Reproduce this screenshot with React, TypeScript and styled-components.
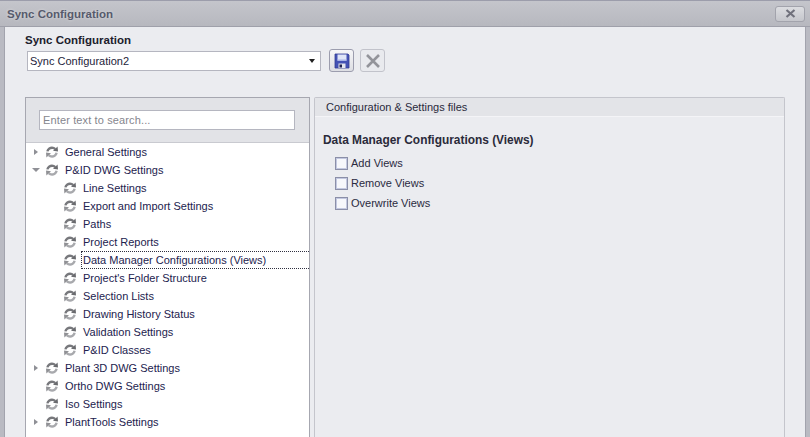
import React from 'react';
import styled, { createGlobalStyle } from 'styled-components';

const GlobalStyle = createGlobalStyle`
  html, body {
    margin: 0;
    width: 810px;
    height: 437px;
    overflow: hidden;
    background: #b9bac2;
    font-family: 'Liberation Sans', Arial, sans-serif;
    font-size: 11px;
  }
`;

type TreeNode = { label: string; expander?: 'closed' | 'open'; child?: boolean; focused?: boolean };

const nodes: TreeNode[] = [
  { label: 'General Settings', expander: 'closed' },
  { label: 'P&ID DWG Settings', expander: 'open' },
  { label: 'Line Settings', child: true },
  { label: 'Export and Import Settings', child: true },
  { label: 'Paths', child: true },
  { label: 'Project Reports', child: true },
  { label: 'Data Manager Configurations (Views)', child: true, focused: true },
  { label: "Project's Folder Structure", child: true },
  { label: 'Selection Lists', child: true },
  { label: 'Drawing History Status', child: true },
  { label: 'Validation Settings', child: true },
  { label: 'P&ID Classes', child: true },
  { label: 'Plant 3D DWG Settings', expander: 'closed' },
  { label: 'Ortho DWG Settings' },
  { label: 'Iso Settings' },
  { label: 'PlantTools Settings', expander: 'closed' },
];

const SyncIcon = () => (
  <SyncSvg viewBox="0 0 14 14">
    <path d="M2.4 6.4C2.8 4 5.4 2.2 8 2.8c.9.2 1.6.7 2.2 1.3" fill="none" stroke="#77787c" strokeWidth="2.4" />
    <path d="M8 5.8 13 6.6 12.6 1.4z" fill="#6a6b6f" />
    <path d="M11.6 7.8c-.4 2.4-3 4.2-5.6 3.6-.9-.2-1.6-.7-2.2-1.3" fill="none" stroke="#a8a9ad" strokeWidth="2.4" />
    <path d="M6 8.2 1 7.4 1.4 12.6z" fill="#909195" />
  </SyncSvg>
);

const SaveIcon = () => (
  <svg width="16" height="16" viewBox="0 0 16 16">
    <path d="M1 1h13l1 1v13H1z" fill="#4452b4" stroke="#343c94" strokeWidth="0.8" />
    <rect x="3.5" y="1.5" width="9" height="6" fill="#dfe5f8" />
    <rect x="3.5" y="6.5" width="9" height="1.5" fill="#a9b4e6" />
    <rect x="4.5" y="10.5" width="7" height="4.5" fill="#e4e6ee" />
    <rect x="5.5" y="11.5" width="2.5" height="3" fill="#1f2350" />
  </svg>
);

const CrossIcon = () => (
  <svg width="16" height="16" viewBox="0 0 16 16">
    <path d="M2 2l12 12M14 2 2 14" stroke="#93949a" strokeWidth="2.6" fill="none" />
  </svg>
);

const CloseGlyph = () => (
  <svg width="11" height="9" viewBox="0 0 11 9">
    <path d="M1.5 1l8 7M9.5 1l-8 7" stroke="#70717c" strokeWidth="2.2" fill="none" />
  </svg>
);

const App = () => (
  <>
    <GlobalStyle />
    <Win>
      <TitleBar>
        <TitleText>Sync Configuration</TitleText>
        <CloseButton>
          <CloseGlyph />
        </CloseButton>
      </TitleBar>
      <Body>
        <SectionLabel>Sync Configuration</SectionLabel>
        <ComboRow>
          <Combo>
            <span>Sync Configuration2</span>
            <ComboArrow />
          </Combo>
          <ToolButton $active>
            <SaveIcon />
          </ToolButton>
          <ToolButton>
            <CrossIcon />
          </ToolButton>
        </ComboRow>
        <Panels>
          <TreePanel>
            <SearchBar>
              <SearchInput>Enter text to search...</SearchInput>
            </SearchBar>
            <Tree>
              {nodes.map(n => (
                <Row key={n.label} $child={n.child}>
                  <Expander>
                    {n.expander === 'closed' && <ClosedArrow />}
                    {n.expander === 'open' && <OpenArrow />}
                  </Expander>
                  <SyncIcon />
                  <RowLabel $focused={n.focused}>{n.label}</RowLabel>
                </Row>
              ))}
            </Tree>
          </TreePanel>
          <SettingsPanel>
            <SettingsHeader>Configuration &amp; Settings files</SettingsHeader>
            <SettingsBody>
              <SettingsTitle>Data Manager Configurations (Views)</SettingsTitle>
              <CheckList>
                <CheckRow>
                  <CheckBox />
                  Add Views
                </CheckRow>
                <CheckRow>
                  <CheckBox />
                  Remove Views
                </CheckRow>
                <CheckRow>
                  <CheckBox />
                  Overwrite Views
                </CheckRow>
              </CheckList>
            </SettingsBody>
          </SettingsPanel>
        </Panels>
      </Body>
    </Win>
  </>
);

const Win = styled.div`
  width: 810px;
  height: 437px;
  display: flex;
  flex-direction: column;
  box-sizing: border-box;
  border-top: 1px solid #9c9dab;
  overflow: hidden;
`;

const TitleBar = styled.div`
  height: 25px;
  flex: none;
  display: flex;
  align-items: center;
  justify-content: space-between;
  padding: 0 5px 0 7px;
  background: linear-gradient(#c4c5cb, #b7b8bf);
  border-bottom: 1px solid #9fa0aa;
`;

const TitleText = styled.div`
  font-size: 11.5px;
  font-weight: bold;
  color: #565a6c;
  text-shadow: 0 0 3px rgba(255, 255, 255, 0.5);
`;

const CloseButton = styled.div`
  width: 28px;
  height: 14px;
  display: flex;
  align-items: center;
  justify-content: center;
  border: 1px solid #a2a3ac;
  border-radius: 3px;
  background: linear-gradient(#dcdde1, #c5c6cc);
`;

const Body = styled.div`
  flex: 1;
  min-height: 0;
  margin: 0 4px 0 4px;
  padding: 6px 20px 0 20px;
  background: #ebecf0;
  border-left: 1px solid #a2a3ad;
  border-right: 1px solid #a2a3ad;
`;

const SectionLabel = styled.div`
  height: 16px;
  line-height: 15px;
  font-size: 11.5px;
  font-weight: bold;
  color: #20202c;
`;

const ComboRow = styled.div`
  display: flex;
  align-items: center;
  margin: 0 0 25px 2px;
  height: 23px;
`;

const Combo = styled.div`
  width: 294px;
  height: 20px;
  box-sizing: border-box;
  display: flex;
  align-items: center;
  justify-content: space-between;
  padding: 0 5px 0 2px;
  margin-right: 8px;
  background: #fff;
  border: 1px solid #b5b6c0;
  color: #23233a;
`;

const ComboArrow = styled.span`
  border-left: 3.5px solid transparent;
  border-right: 3.5px solid transparent;
  border-top: 4px solid #202020;
`;

const ToolButton = styled.div<{ $active?: boolean }>`
  width: 25px;
  height: 23px;
  box-sizing: border-box;
  display: flex;
  align-items: center;
  justify-content: center;
  margin-right: 6px;
  border-radius: 3px;
  border: 1px solid ${p => (p.$active ? '#9c9dae' : '#c2c3cb')};
  background: ${p => (p.$active ? 'linear-gradient(#f6f6f8, #dddee3)' : '#e9eaee')};
`;

const Panels = styled.div`
  display: flex;
  gap: 4px;
  height: 360px;
`;

const TreePanel = styled.div`
  width: 285px;
  flex: none;
  box-sizing: border-box;
  display: flex;
  flex-direction: column;
  border: 1px solid #a6a7b0;
  border-bottom: none;
  background: #fff;
`;

const SearchBar = styled.div`
  height: 45px;
  flex: none;
  box-sizing: border-box;
  padding: 12px 14px 0 13px;
  background: #e2e3e7;
  border-bottom: 1px solid #c9cad0;
`;

const SearchInput = styled.div`
  height: 20px;
  line-height: 18px;
  box-sizing: border-box;
  padding-left: 3px;
  background: #fff;
  border: 1px solid #b5b6c0;
  color: #85868e;
  letter-spacing: 0.13px;
`;

const Tree = styled.div`
  display: flex;
  flex-direction: column;
`;

const Row = styled.div<{ $child?: boolean }>`
  height: 18px;
  display: flex;
  align-items: center;
  padding-left: ${p => (p.$child ? '38px' : '20px')};
  color: #22224e;
  white-space: nowrap;
`;

const Expander = styled.span`
  width: 7px;
  height: 9px;
  margin-left: -14px;
  margin-right: 7px;
  display: flex;
  align-items: center;
  justify-content: center;
  flex: none;
`;

const ClosedArrow = styled.span`
  border-top: 3.5px solid transparent;
  border-bottom: 3.5px solid transparent;
  border-left: 4px solid #8f9096;
`;

const OpenArrow = styled.span`
  border-left: 4px solid transparent;
  border-right: 4px solid transparent;
  border-top: 4px solid #8f9096;
`;

const SyncSvg = styled.svg`
  width: 14px;
  height: 14px;
  flex: none;
  margin-right: 4px;
  margin-left: -1px;
`;

const RowLabel = styled.span<{ $focused?: boolean }>`
  flex: ${p => (p.$focused ? '1' : 'none')};
  height: 18px;
  line-height: 16px;
  box-sizing: border-box;
  padding-left: 1px;
  border: 1px ${p => (p.$focused ? 'dotted #303040' : 'solid transparent')};
  border-width: ${p => (p.$focused ? '1px 0 1px 1px' : '1px')};
`;

const SettingsPanel = styled.div`
  width: 471px;
  flex: none;
  box-sizing: border-box;
  border: 1px solid #c4c5cc;
  border-bottom: none;
  border-radius: 2px 2px 0 0;
`;

const SettingsHeader = styled.div`
  height: 18px;
  line-height: 18px;
  padding-left: 11px;
  color: #2a2a3c;
  background: #e3e4e8;
  border-bottom: 1px solid #f4f4f7;
`;

const SettingsBody = styled.div`
  padding: 15px 0 0 8px;
`;

const SettingsTitle = styled.div`
  height: 16px;
  line-height: 16px;
  font-size: 11.9px;
  font-weight: bold;
  color: #2a2a3a;
  margin-bottom: 5px;
`;

const CheckList = styled.div`
  display: flex;
  flex-direction: column;
  padding-left: 12px;
`;

const CheckRow = styled.div`
  height: 20px;
  display: flex;
  align-items: center;
  gap: 3px;
  color: #2a2a40;
`;

const CheckBox = styled.span`
  width: 11px;
  height: 11px;
  background: #f6f7fb;
  border: 1px solid #8b8fa8;
  box-shadow: inset 0 0 0 1px #c3c8e0;
`;

export default App;
